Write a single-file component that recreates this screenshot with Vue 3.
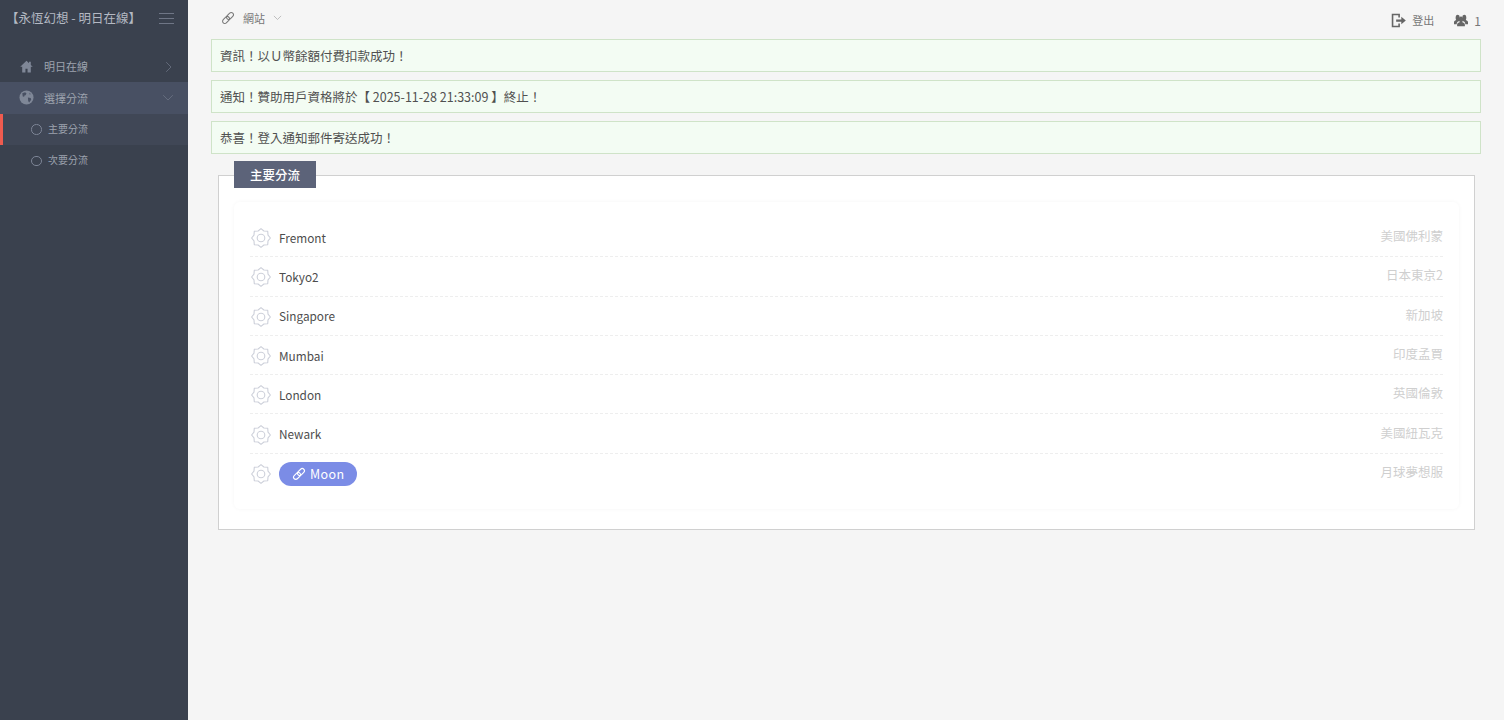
<script setup>
const nodes = [
  { name: 'Fremont', loc: '美國佛利蒙' },
  { name: 'Tokyo2', loc: '日本東京2' },
  { name: 'Singapore', loc: '新加坡' },
  { name: 'Mumbai', loc: '印度孟買' },
  { name: 'London', loc: '英國倫敦' },
  { name: 'Newark', loc: '美國紐瓦克' },
  { name: 'Moon', loc: '月球夢想服', pill: true }
]
const alerts = [
  '資訊！以Ｕ幣餘額付費扣款成功！',
  '通知！贊助用戶資格將於【 2025-11-28 21:33:09 】終止！',
  '恭喜！登入通知郵件寄送成功！'
]
</script>

<template>
  <div class="page">
    <aside class="side">
      <div class="brand">
        <span class="brand-text">【永恆幻想 - 明日在線】</span>
        <span class="burger"><i></i><i></i><i></i></span>
      </div>
      <nav class="menu">
        <div class="item">
          <svg class="mi" viewBox="0 0 16 16" width="13" height="13"><path fill="#7f8797" d="M8 1L.3 8.300h2.400V15.500h4v-4.700h2.600v4.700h4V8.300h2.400L13.300 6V2h-2.200v1.900L8 1z"/></svg>
          <span>明日在線</span>
          <svg class="chev" viewBox="0 0 10 14" width="8" height="12"><path d="M1.500 1l6 6-6 6" fill="none" stroke="#6c7484" stroke-width="1"/></svg>
        </div>
        <div class="item open">
          <svg class="mi globe" viewBox="0 0 16 16" width="15" height="15"><circle cx="8" cy="8" r="7.500" fill="#7f8797"/><path fill="#485063" d="M3.500 3.500l3-1.200 1.500 1.500-1 1.700-1.200.3-.3 1.500-1.500-.5zM9.500 8l3 .5.500 2-2.200 2.800-1-1.500zM11 2.800l1.500 1.500-1 .7z"/></svg>
          <span>選擇分流</span>
          <svg class="chev down" viewBox="0 0 14 10" width="12" height="8"><path d="M1 1.500l6 6 6-6" fill="none" stroke="#6c7484" stroke-width="1"/></svg>
        </div>
        <div class="sub active"><b class="dot"></b><span>主要分流</span></div>
        <div class="sub"><b class="dot"></b><span>次要分流</span></div>
      </nav>
    </aside>

    <main class="main">
      <header class="top">
        <div class="site">
          <svg viewBox="0 0 16 16" width="14" height="14"><g transform="rotate(-45 8 8)" fill="none" stroke="#777" stroke-width="1.200"><rect x="0.300" y="5.500" width="9" height="5" rx="2.500"/><rect x="6.700" y="5.500" width="9" height="5" rx="2.500"/></g></svg>
          <span>網站</span>
          <svg viewBox="0 0 14 10" width="9" height="6"><path d="M1 1.500l6 6 6-6" fill="none" stroke="#aaa" stroke-width="1.200"/></svg>
        </div>
        <div class="right">
          <span class="act">
            <svg viewBox="0 0 16 16" width="15" height="15"><path fill="#666" d="M.8.800h8.700v4H7.800V2.500H2.500v11h5.300v-2.300h1.700v4H.8z"/><path fill="#666" d="M5.500 6.800h5.500V4L15.800 8 11 12V9.200H5.500z"/></svg>
            <span>登出</span>
          </span>
          <span class="act users">
            <svg viewBox="0 0 18 16" width="14" height="13" preserveAspectRatio="none"><path fill="#666" d="M4.500 1C6 1 7 2 7.200 3 6.300 4.200 6 6.800 7.300 8.200L6 9C4 9.800 3.500 10.800 3.500 12.500H0V9.800c0-1 1-1.700 2.800-2.400C1.600 5.500 2 1 4.500 1zM13.500 1C12 1 11 2 10.800 3c.9 1.200 1.200 3.800-.1 5.200L12 9c2 .8 2.500 1.800 2.500 3.500H18V9.800c0-1-1-1.700-2.800-2.400C16.400 5.500 16 1 13.500 1z"/><path fill="#666" d="M9 3c2 0 3 1.500 3 3.300 0 1.200-.5 2.300-1.200 2.800v1c2.400.8 3.200 1.600 3.200 3V15H4v-1.900c0-1.400.8-2.200 3.200-3v-1C6.500 8.600 6 7.500 6 6.300 6 4.500 7 3 9 3z"/></svg>
            <span>1</span>
          </span>
        </div>
      </header>

      <div class="alerts">
        <div v-for="a in alerts" :key="a" class="alert">{{ a }}</div>
      </div>

      <section class="panel">
        <h2 class="legend">主要分流</h2>
        <div class="card">
          <div v-for="n in nodes" :key="n.name" class="row">
            <svg class="gear" viewBox="0 0 20 20" width="20" height="20">
              <path d="M10 .6L12.910 2.980 16.720 3.280 17.020 7.090 19.400 10 17.020 12.910 16.720 16.720 12.910 17.020 10 19.400 7.090 17.020 3.280 16.720 2.980 12.910.6 10 2.980 7.090 3.280 3.280 7.090 2.980z" fill="none" stroke="#cdd0da" stroke-width="1.100" stroke-linejoin="round"/>
              <circle cx="10" cy="10" r="3.800" fill="none" stroke="#cdd0da" stroke-width="1.100"/>
            </svg>
            <span v-if="n.pill" class="pill">
              <svg viewBox="0 0 16 16" width="14" height="14"><g transform="rotate(-45 8 8)" fill="none" stroke="#fff" stroke-width="1.300"><rect x="0.300" y="5.500" width="9" height="5" rx="2.500"/><rect x="6.700" y="5.500" width="9" height="5" rx="2.500"/></g></svg>
              <span class="pill-text">{{ n.name }}</span>
            </span>
            <span v-else class="name">{{ n.name }}</span>
            <span class="loc">{{ n.loc }}</span>
          </div>
        </div>
      </section>
    </main>
  </div>
</template>

<style>
html, body { margin: 0; background: #f5f5f5; }
</style>

<style scoped>
.page {
  display: flex;
  height: 720px;
  overflow: hidden;
  font-family: "Noto Sans CJK TC", "Noto Sans", sans-serif;
  background: #f5f5f5;
  color: #555;
}
.side { width: 188px; flex: none; background: #3a414e; color: #9da3ae; }
.brand {
  height: 36px;
  display: flex;
  align-items: center;
  justify-content: space-between;
  padding: 0 14px 0 6px;
  font-size: 12.500px;
  color: #b4b9c3;
}
.brand-text { white-space: nowrap; padding-bottom: 2px; }
.burger { display: flex; flex-direction: column; gap: 4px; width: 15px; }
.burger i { display: block; height: 1px; background: #6f7686; }
.menu { margin-top: 14.500px; }
.item {
  height: 31.500px;
  display: flex;
  align-items: center;
  padding-left: 20px;
  font-size: 11px;
  position: relative;
}
.item span { margin-left: 11px; }
.item .globe + span { margin-left: 10px; }
.item .globe { margin-left: -1px; }
.item.open { background: #485063; }
.chev { position: absolute; right: 15px; top: 10px; }
.chev.down { right: 14px; top: 12px; }
.sub {
  height: 31.500px;
  display: flex;
  align-items: center;
  padding-left: 31px;
  font-size: 10px;
  box-sizing: border-box;
}
.sub span { padding-bottom: 2px; }
.sub.active { background: #404756; border-left: 3px solid #ef5b4f; padding-left: 28px; }
.dot {
  width: 8.500px;
  height: 8.500px;
  border: 1.200px solid #7d8596;
  border-radius: 50%;
  margin-right: 6.500px;
  box-sizing: content-box;
}
.main { flex: 1; min-width: 0; }
.top {
  height: 36px;
  display: flex;
  align-items: center;
  justify-content: space-between;
  padding: 0 23px 0 33px;
  font-size: 11px;
  color: #777;
}
.site { display: flex; align-items: center; gap: 8px; }
.right { display: flex; align-items: center; gap: 20px; padding-top: 4px; }
.act { display: flex; align-items: center; gap: 6px; }
.users { font-size: 12px; }
.alerts {
  margin: 3px 23px 0;
  display: flex;
  flex-direction: column;
  gap: 8px;
}
.alert {
  height: 33px;
  box-sizing: border-box;
  display: flex;
  align-items: center;
  padding: 0 0 0 8px;
  background: #f3fcf3;
  border: 1px solid #cfe3c8;
  font-size: 12.500px;
  color: #505050;
  white-space: pre;
}
.panel {
  position: relative;
  margin: 21px 29px 0 30px;
  height: 355px;
  box-sizing: border-box;
  background: #fff;
  border: 1px solid #d0d0d0;
  padding: 26px 15px 0;
}
.legend {
  position: absolute;
  left: 15px;
  top: -15px;
  width: 82px;
  height: 27px;
  margin: 0;
  padding-bottom: 1px;
  box-sizing: border-box;
  background: #5c6379;
  color: #fff;
  font-size: 12.500px;
  font-weight: 500;
  display: flex;
  align-items: center;
  justify-content: center;
}
.card {
  height: 307px;
  box-sizing: border-box;
  border-radius: 6px;
  box-shadow: 0 0 4px rgba(0, 0, 0, 0.04);
  padding: 16px 16px 0;
}
.row {
  height: 39.300px;
  box-sizing: border-box;
  display: flex;
  align-items: center;
  border-bottom: 1px dashed #eee;
}
.row:last-child { border-bottom: 0; }
.gear { flex: none; margin: 2px 8px 0 1px; }
.name { font-size: 11.800px; color: #4d4d4d; }
.loc { margin-left: auto; font-size: 12.500px; color: #cfcfcf; padding-bottom: 3px; }
.pill {
  display: flex;
  align-items: center;
  gap: 4px;
  height: 24px;
  margin-top: 2px;
  padding: 0 12px 0 13px;
  border-radius: 12px;
  background: #7b8ce6;
  color: #fff;
  font-size: 12.500px;
  letter-spacing: 0.4px;
}
.pill-text { padding-bottom: 2px; }
</style>
